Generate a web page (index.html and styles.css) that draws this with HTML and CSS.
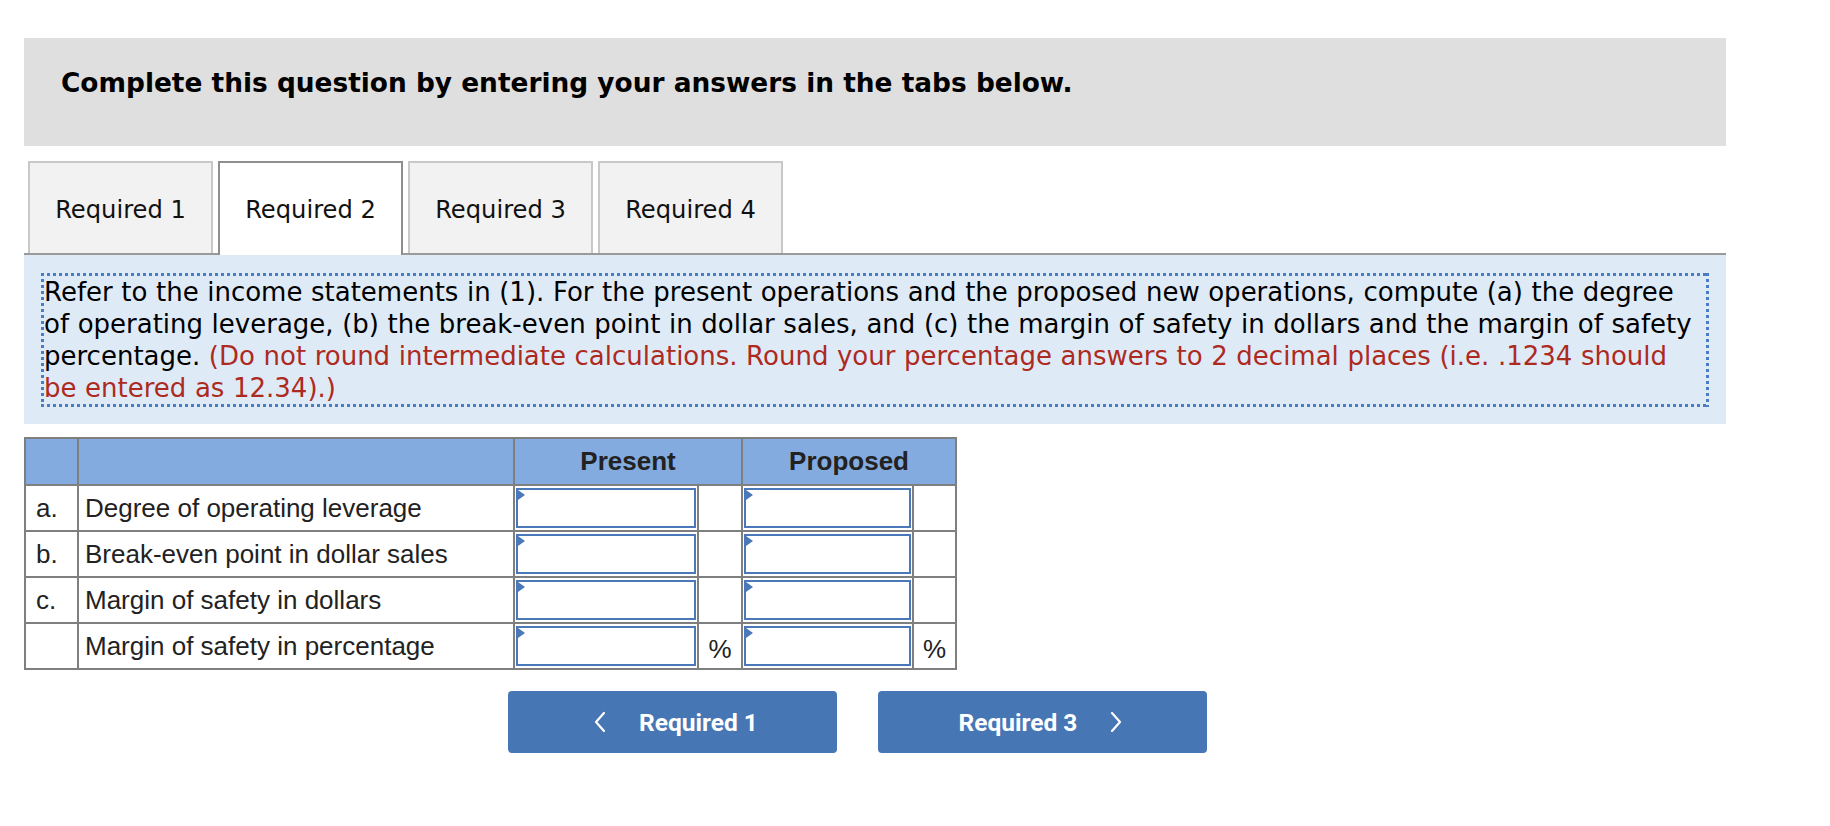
FILE: index.html
```html
<!DOCTYPE html>
<html lang="en">
<head>
<meta charset="utf-8">
<title>Required 2</title>
<link rel="stylesheet" href="styles.css">
</head>
<body>
<div class="page">
  <div class="instr">
    <h2 class="instr-title">Complete this question by entering your answers in the tabs below.</h2>
  </div>

  <div class="tabs">
    <div class="tab">Required 1</div>
    <div class="tab active">Required 2</div>
    <div class="tab">Required 3</div>
    <div class="tab">Required 4</div>
  </div>

  <div class="panel">
    <div class="prompt">Refer to the income statements in (1). For the present operations and the proposed new operations, compute (a) the degree of operating leverage, (b) the break-even point in dollar sales, and (c) the margin of safety in dollars and the margin of safety percentage. <span class="note">(Do not round intermediate calculations. Round your percentage answers to 2 decimal places (i.e. .1234 should be entered as 12.34).)</span></div>
  </div>

  <table class="grid">
    <colgroup>
      <col class="c-letter">
      <col class="c-label">
      <col class="c-in1">
      <col class="c-pct1">
      <col class="c-in2">
      <col class="c-pct2">
    </colgroup>
    <thead>
      <tr class="head">
        <th></th>
        <th></th>
        <th colspan="2">Present</th>
        <th colspan="2">Proposed</th>
      </tr>
    </thead>
    <tbody>
      <tr>
        <td class="letter">a.</td>
        <td class="label">Degree of operating leverage</td>
        <td class="cell-in"><div class="inp"></div></td>
        <td class="pct"></td>
        <td class="cell-in"><div class="inp"></div></td>
        <td class="pct"></td>
      </tr>
      <tr>
        <td class="letter">b.</td>
        <td class="label">Break-even point in dollar sales</td>
        <td class="cell-in"><div class="inp"></div></td>
        <td class="pct"></td>
        <td class="cell-in"><div class="inp"></div></td>
        <td class="pct"></td>
      </tr>
      <tr>
        <td class="letter">c.</td>
        <td class="label">Margin of safety in dollars</td>
        <td class="cell-in"><div class="inp"></div></td>
        <td class="pct"></td>
        <td class="cell-in"><div class="inp"></div></td>
        <td class="pct"></td>
      </tr>
      <tr>
        <td class="letter"></td>
        <td class="label">Margin of safety in percentage</td>
        <td class="cell-in"><div class="inp"></div></td>
        <td class="pct">%</td>
        <td class="cell-in"><div class="inp"></div></td>
        <td class="pct">%</td>
      </tr>
    </tbody>
  </table>

  <div class="nav">
    <button class="btn btn-prev" type="button">
      <svg class="chev" viewBox="0 0 12 22" width="12" height="22"><polyline points="10,2 2,11 10,20" fill="none" stroke="#fff" stroke-width="2.2" stroke-linecap="round" stroke-linejoin="round"/></svg>
      <span>Required 1</span>
    </button>
    <button class="btn btn-next" type="button">
      <span>Required 3</span>
      <svg class="chev" viewBox="0 0 12 22" width="12" height="22"><polyline points="2,2 10,11 2,20" fill="none" stroke="#fff" stroke-width="2.2" stroke-linecap="round" stroke-linejoin="round"/></svg>
    </button>
  </div>
</div>
</body>
</html>
```

FILE: styles.css
```css
* { box-sizing: border-box; }

body {
  margin: 0;
  background: #ffffff;
  color: #000;
}

.page {
  width: 1726px;
  padding: 38px 0 0 24px;
}

/* instruction bar */
.instr {
  height: 108px;
  background: #dfdfdf;
  padding: 29px 37px 0;
}

.instr-title {
  margin: 0;
  font-family: "DejaVu Sans", Verdana, sans-serif;
  font-weight: bold;
  font-size: 26.4px;
  line-height: 32px;
  color: #000;
}

/* tabs */
.tabs {
  display: flex;
  gap: 5px;
  margin-top: 15px;
  padding-left: 4px;
  border-bottom: 2px solid #9a9a9a;
}

.tab {
  width: 185px;
  height: 92px;
  background: #f2f2f2;
  border: 2px solid #c8c8c8;
  border-bottom: none;
  display: flex;
  align-items: center;
  justify-content: center;
  font-family: "DejaVu Sans", Verdana, sans-serif;
  font-size: 24.2px;
  color: #111;
  padding-top: 4px;
}

.tab.active {
  background: #ffffff;
  border-color: #8e8e8e;
  height: 94px;
  margin-bottom: -2px;
  padding-top: 2px;
}

/* prompt panel */
.panel {
  background: #dfeaf7;
  padding: 18px 17px 17px;
}

.prompt {
  padding: 3px;
  font-family: "DejaVu Sans", Verdana, sans-serif;
  font-size: 26px;
  word-spacing: 0.3px;
  line-height: 32px;
  color: #000;
  background:
    repeating-linear-gradient(90deg, #4a7cc4 0 3px, transparent 3px 6px) left top / 100% 3px no-repeat,
    repeating-linear-gradient(90deg, #4a7cc4 0 3px, transparent 3px 6px) left bottom / 100% 3px no-repeat,
    repeating-linear-gradient(180deg, #4a7cc4 0 3px, transparent 3px 6px) left top / 3px 100% no-repeat,
    repeating-linear-gradient(180deg, #4a7cc4 0 3px, transparent 3px 6px) right top / 3px 100% no-repeat;
}

.note {
  color: #ad2a1f;
}

/* answer grid */
.grid {
  margin-top: 13px;
  border-collapse: collapse;
  table-layout: fixed;
  width: 931px;
  font-family: "Liberation Sans", Arial, Helvetica, sans-serif;
  font-size: 26px;
  color: #222;
}

.c-letter { width: 53px; }
.c-label { width: 436px; }
.c-in1 { width: 184px; }
.c-pct1 { width: 44px; }
.c-in2 { width: 171px; }
.c-pct2 { width: 43px; }

.grid th,
.grid td {
  border: 2px solid #7f7f7f;
  padding: 0;
}

.grid .head th {
  height: 47px;
  background: #83abdf;
  font-weight: bold;
  text-align: center;
  color: #222;
}

.grid tbody tr {
  height: 46px;
}

.letter {
  padding-left: 10px !important;
}

.label {
  padding-left: 6px !important;
  white-space: nowrap;
}

.cell-in {
  padding: 1px !important;
}

.inp {
  position: relative;
  height: 40px;
  border: 2px solid #4a78b8;
  background: #fff;
}

.inp::before {
  content: "";
  position: absolute;
  left: 0;
  top: 0;
  border-top: 5px solid transparent;
  border-bottom: 5px solid transparent;
  border-left: 7px solid #4a78b8;
}

.pct {
  text-align: center;
  padding-top: 6px !important;
}

/* navigation buttons */
.nav {
  display: flex;
  gap: 41px;
  margin-top: 21px;
  padding-left: 484px;
}

.btn {
  width: 329px;
  height: 62px;
  border: none;
  border-radius: 4px;
  background: #4676b4;
  color: #fff;
  display: flex;
  align-items: center;
  justify-content: center;
  gap: 33px;
  font-family: Roboto, "Liberation Sans", sans-serif;
  font-weight: bold;
  font-size: 24.5px;
  padding: 0;
}

.btn-prev {
  padding-left: 7px;
}

.btn-next {
  padding-right: 4px;
}

.chev {
  display: block;
}
```
